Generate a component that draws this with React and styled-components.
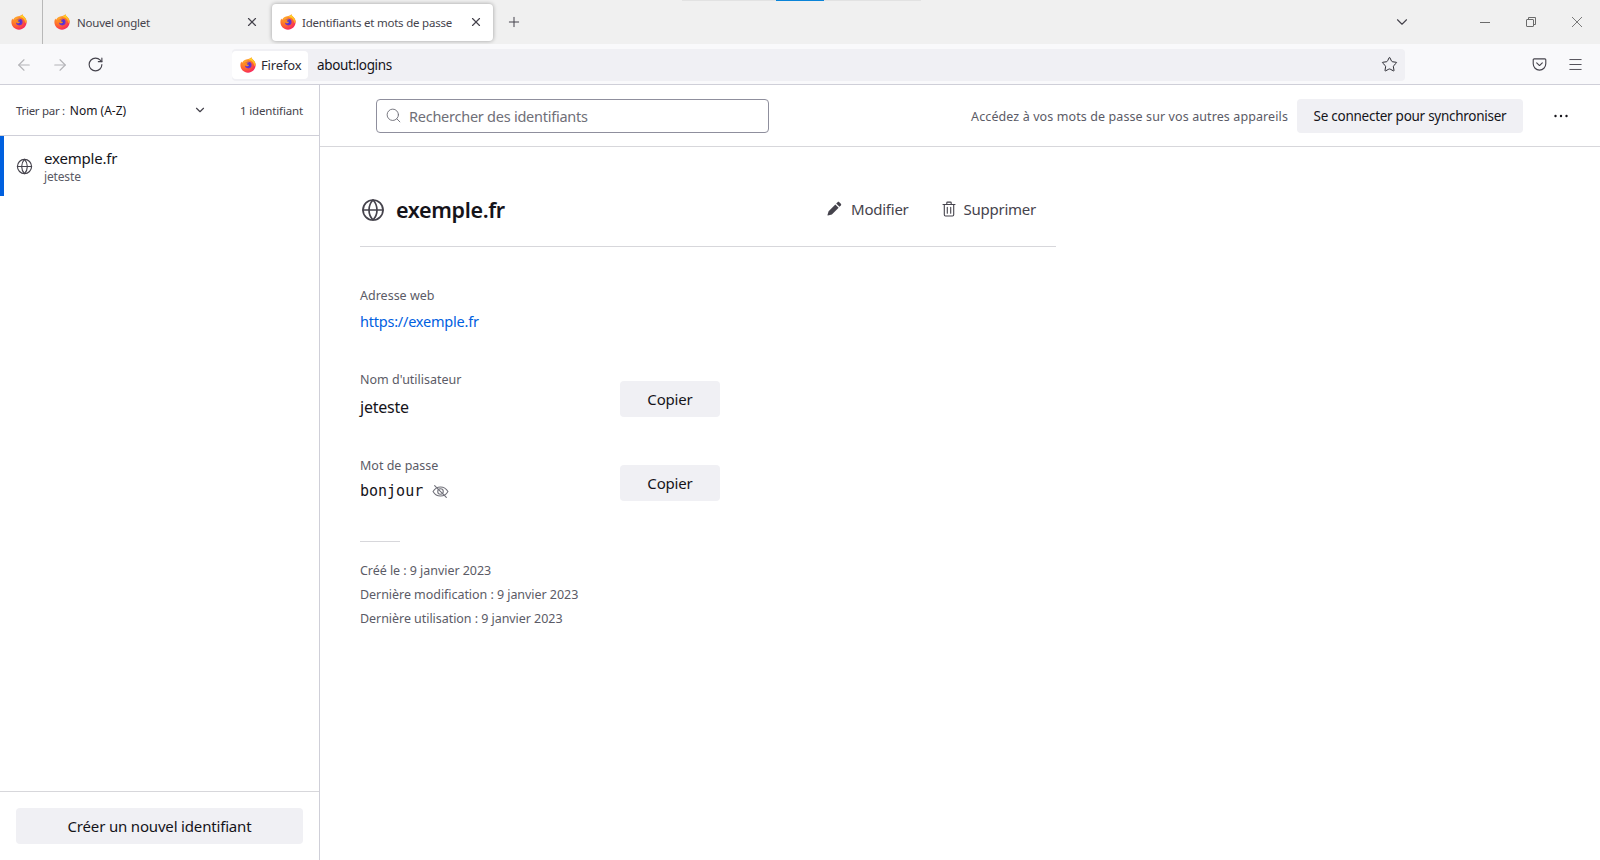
import * as React from 'react';
import styled, { createGlobalStyle } from 'styled-components';
import { ArrowLeft, ArrowRight, ChevronDown, Globe, Menu, Plus, RotateCw, Search, Star, X } from 'lucide-react';

const GlobalStyle = createGlobalStyle`
  html, body { margin: 0; padding: 0; height: 100%; background: #fff; }
  * { box-sizing: border-box; }
  body { font-family: 'Noto Sans', 'Open Sans', sans-serif; color: #15141a; overflow: hidden; }
`;

const Frame = styled.div`
  position: relative;
  width: 1600px;
  height: 860px;
  display: flex;
  flex-direction: column;
  overflow: hidden;
`;

const DragHint = styled.div`
  position: absolute;
  top: 0;
  left: 682px;
  width: 239px;
  height: 1px;
  background: #e2e2e2;
  &::after {
    content: '';
    position: absolute;
    left: 94px;
    width: 48px;
    height: 1px;
    background: #0a84d8;
  }
`;

const TabStrip = styled.div`
  height: 44px;
  flex: none;
  display: flex;
  align-items: center;
  background: #f0f0f0;
`;

const PinnedTab = styled.div`
  width: 43px;
  height: 44px;
  display: flex;
  align-items: center;
  justify-content: center;
  padding-right: 4px;
  border-right: 1px solid #b8b8b8;
`;

const Tab = styled.div`
  height: 37px;
  display: flex;
  align-items: center;
  width: ${(p) => (p.$active ? '221px' : '222px')};
  margin-left: ${(p) => (p.$active ? '7px' : '0')};
  padding: 0 ${(p) => (p.$active ? '10px' : '6px')} 0 ${(p) => (p.$active ? '8px' : '11px')};
  border-radius: 4px;
  background: ${(p) => (p.$active ? '#fff' : 'transparent')};
  box-shadow: ${(p) => (p.$active ? '0 0 4px rgba(0, 0, 0, 0.35)' : 'none')};
  color: #45434c;
  font-size: 11.5px;
`;

const TabTitle = styled.span`
  flex: 1;
  margin-left: ${(p) => (p.$active ? 6 : 7)}px;
  white-space: nowrap;
  letter-spacing: -0.22px;
`;

const NewTab = styled.div`
  margin-left: 13px;
  display: flex;
  color: #45434c;
`;

const TabStripEnd = styled.div`
  margin-left: auto;
  display: flex;
  align-items: center;
`;

const ListAll = styled.div`
  display: flex;
  margin-right: 51px;
  color: #45434c;
`;

const WindowButton = styled.div`
  width: 46px;
  display: flex;
  justify-content: center;
  color: #6b6b6b;
`;

const Toolbar = styled.div`
  height: 41px;
  flex: none;
  display: flex;
  align-items: center;
  padding-top: 1px;
  background: #f9f9fb;
  border-bottom: 1px solid #cfcfd8;
`;

const NavGroup = styled.div`
  width: 232px;
  padding-left: 15px;
  display: flex;
  align-items: center;
  gap: 18px;
`;

const NavButton = styled.div`
  display: flex;
  color: ${(p) => (p.$disabled ? '#b4b4b8' : '#45434c')};
`;

const UrlBar = styled.div`
  width: 1173px;
  height: 32px;
  display: flex;
  align-items: center;
  padding: 0 7px 0 0;
  background: #f0f0f4;
  border-radius: 4px;
`;

const IdentityChip = styled.div`
  width: 76px;
  height: 28px;
  display: flex;
  align-items: center;
  gap: 5px;
  padding-left: 8px;
  background: #fff;
  border-radius: 4px;
  font-size: 13px;
  letter-spacing: -0.13px;
  color: #2b2a33;
`;

const UrlText = styled.span`
  margin-left: 9px;
  flex: 1;
  font-size: 13.5px;
  letter-spacing: -0.36px;
  color: #15141a;
`;

const ToolbarEnd = styled.div`
  flex: 1;
  display: flex;
  align-items: center;
  justify-content: flex-end;
  gap: 20px;
  padding-right: 16px;
  color: #45434c;
`;

const Body = styled.div`
  flex: 1;
  display: flex;
  min-height: 0;
`;

const Sidebar = styled.aside`
  width: 320px;
  flex: none;
  display: flex;
  flex-direction: column;
  border-right: 1px solid #cfcfd8;
`;

const SortBar = styled.div`
  height: 51px;
  flex: none;
  display: flex;
  align-items: center;
  padding: 0 16px;
  border-bottom: 1px solid #cfcfd8;
  font-size: 11.5px;
  color: #45434c;
`;

const SortLabel = styled.span`
  letter-spacing: -0.3px;
`;

const SortValue = styled.span`
  margin-left: 5px;
  font-size: 12px;
  color: #15141a;
  letter-spacing: 0;
`;

const SortChevron = styled.span`
  margin-left: 67px;
  display: flex;
  color: #45434c;
`;

const Count = styled.span`
  margin-left: auto;
  letter-spacing: -0.15px;
`;

const LoginList = styled.div`
  flex: 1;
`;

const LoginItem = styled.div`
  height: 60px;
  display: flex;
  align-items: center;
  padding-left: 12px;
  border-left: 4px solid #0060df;
`;

const LoginText = styled.div`
  margin-left: 11px;
  padding-top: 3px;
  display: flex;
  flex-direction: column;
`;

const LoginTitle = styled.span`
  font-size: 15px;
  line-height: 19px;
  letter-spacing: -0.2px;
  color: #15141a;
`;

const LoginSub = styled.span`
  font-size: 12px;
  line-height: 18px;
  letter-spacing: -0.15px;
  color: #5b5b66;
`;

const SidebarFooter = styled.div`
  flex: none;
  padding: 16px;
  border-top: 1px solid #d7d7db;
`;

const Button = styled.button`
  height: 36px;
  padding: 0;
  flex: none;
  border: 0;
  border-radius: 4px;
  background: #f0f0f4;
  color: #15141a;
  font-family: inherit;
  font-size: ${(p) => p.$size || 15}px;
  letter-spacing: -0.17px;
`;

const CreateButton = styled(Button)`
  display: block;
  width: 100%;
`;

const Main = styled.main`
  flex: 1;
  display: flex;
  flex-direction: column;
`;

const MainHeader = styled.header`
  height: 62px;
  flex: none;
  display: flex;
  align-items: center;
  padding: 0 31px 0 56px;
  border-bottom: 1px solid #d7d7db;
`;

const SearchBox = styled.div`
  width: 393px;
  height: 34px;
  display: flex;
  align-items: center;
  gap: 7px;
  padding-left: 8px;
  border: 1px solid #8f8f9d;
  border-radius: 4px;
  color: #6f6f78;
  font-size: 14.5px;
  letter-spacing: -0.25px;
`;

const SyncHint = styled.span`
  margin-left: auto;
  padding-top: 1px;
  font-size: 12.5px;
  letter-spacing: 0.1px;
  color: #5b5b66;
`;

const SyncButton = styled(Button)`
  margin-left: 9px;
  width: 226px;
  height: 34px;
  letter-spacing: -0.27px;
`;

const More = styled.div`
  margin-left: 30px;
  display: flex;
  color: #15141a;
`;

const Details = styled.section`
  width: 696px;
  margin-left: 40px;
`;

const TitleRow = styled.div`
  height: 100px;
  display: flex;
  align-items: center;
  padding: 26px 20px 0 1px;
  border-bottom: 1px solid #d7d7db;
`;

const Title = styled.h2`
  margin: 0 0 0 11px;
  flex: 1;
  font-size: 21.5px;
  font-weight: 600;
  letter-spacing: -0.35px;
  color: #15141a;
`;

const Action = styled.div`
  display: flex;
  align-items: center;
  gap: ${(p) => p.$inner}px;
  margin-left: ${(p) => p.$gap || 0}px;
  margin-bottom: 2px;
  font-size: 15px;
  letter-spacing: -0.25px;
  color: #45434c;
`;

const Field = styled.div`
  display: flex;
  align-items: flex-start;
  margin-top: ${(p) => p.$top}px;
`;

const FieldText = styled.div`
  width: 260px;
`;

const Label = styled.div`
  font-size: 12.5px;
  line-height: 18px;
  letter-spacing: 0;
  color: #5b5b66;
`;

const Value = styled.div`
  margin-top: ${(p) => p.$top || 4}px;
  display: flex;
  align-items: center;
  height: 24px;
  font-size: 16px;
  letter-spacing: -0.22px;
  color: #15141a;
`;

const LinkValue = styled.a`
  font-size: 14.5px;
  letter-spacing: -0.22px;
  color: #0060df;
  text-decoration: none;
`;

const Password = styled.span`
  font-family: 'DejaVu Sans Mono', 'Liberation Mono', monospace;
  font-size: 15px;
  margin-right: 9px;
  letter-spacing: 0;
`;

const CopyButton = styled(Button)`
  width: 100px;
  margin-top: ${(p) => p.$top}px;
`;

const ShortRule = styled.hr`
  width: 40px;
  height: 1px;
  margin: 38px 0 0;
  border: 0;
  background: #d7d7db;
`;

const Meta = styled.div`
  margin-top: 17px;
`;

const MetaLine = styled.div`
  font-size: 12.5px;
  line-height: 24px;
  letter-spacing: -0.05px;
  color: #5b5b66;
`;

const FirefoxLogo = () => {
  const id = React.useId();
  return (
    <svg width="16" height="16" viewBox="0 0 16 16">
      <defs>
        <radialGradient id={`${id}a`} cx="0.3" cy="0.25" r="0.9">
          <stop offset="0" stopColor="#ffa92a" />
          <stop offset="0.5" stopColor="#ff6a2b" />
          <stop offset="1" stopColor="#f5156c" />
        </radialGradient>
        <linearGradient id={`${id}b`} x1="0" y1="0" x2="0" y2="1">
          <stop offset="0" stopColor="#ffe226" />
          <stop offset="1" stopColor="#ff9a1f" />
        </linearGradient>
      </defs>
      <path d="M11.4 0.3c0.2 1.4 1.5 2.2 2.4 3.3 1.1 1.3 1.8 2.8 1.8 4.5 0 4.2-3.4 7.6-7.6 7.6S0.4 12.3 0.4 8.1c0-1.2 0.3-2.5 0.9-3.6 0.2 0.6 0.5 1 0.9 1.3 0.5-1.5 2-3.1 3.9-3.3 1.9-0.3 4.2-0.6 5.3-2.2z" fill={`url(#${id}a)`} />
      <path d="M11.3 0.3c-0.6 1.5-2.2 2.2-3.7 2.4 2.6 0.2 5.6 1.6 6.4 5.4 0.4 1.9 1.1 1.3 1.6 0 0-1.700-0.7-3.200-1.800-4.500-0.900-1.100-2.300-1.900-2.500-3.300z" fill={`url(#${id}b)`} />
      <circle cx="8.300" cy="8.100" r="3.300" fill="#6a2fd0" />
      <circle cx="8.500" cy="8.100" r="1.700" fill="#3d3ad8" />
      <path d="M3.800 6.200c1.600-1.300 4.200-1.400 5.600-0.200-1.300-0.200-2.200 0.300-2.700 1 0.500 0.800 1.600 0.700 2.600 0.700-0.300 1-1.500 1.700-2.600 1.500-1.300-0.200-2.400-1.500-2.900-3z" fill="#ff8a1c" />
    </svg>
  );
};

const RestoreIcon = () => (
  <svg width="12" height="12" viewBox="0 0 12 12" fill="none" stroke="currentColor">
    <rect x="1.500" y="3.500" width="7" height="7" rx="0.500" />
    <path d="M3.500 3.500V1.500h7v7H8.500" />
  </svg>
);

const MinimizeIcon = () => (
  <svg width="12" height="12" viewBox="0 0 12 12" fill="none" stroke="currentColor">
    <path d="M1 6.500h10" />
  </svg>
);

const ThinClose = () => (
  <svg width="12" height="12" viewBox="0 0 12 12" fill="none" stroke="currentColor" strokeWidth="0.900">
    <path d="M1 1l10 10M11 1L1 11" />
  </svg>
);

const PocketIcon = () => (
  <svg width="15" height="15" viewBox="0 0 16 16" fill="none" stroke="currentColor" strokeWidth="1.200" strokeLinecap="round" strokeLinejoin="round">
    <path d="M2.300 2h11.400c0.600 0 1 0.400 1 1v4.200c0 3.700-3 6.800-6.700 6.800S1.300 10.900 1.300 7.200V3c0-0.600 0.400-1 1-1z" />
    <path d="M5 6.200l3 2.900 3-2.900" />
  </svg>
);

const Dots = () => (
  <svg width="16" height="16" viewBox="0 0 16 16" fill="currentColor">
    <circle cx="2.500" cy="8" r="1.200" />
    <circle cx="8" cy="8" r="1.200" />
    <circle cx="13.500" cy="8" r="1.200" />
  </svg>
);

const PencilIcon = () => (
  <svg width="15" height="15" viewBox="0 0 16 16" fill="currentColor">
    <path d="M11.300 1.200c0.500-0.500 1.300-0.500 1.800 0l1.700 1.700c0.500 0.500 0.500 1.300 0 1.800l-1.500 1.500-3.500-3.500 1.500-1.500zM8.900 3.600l3.500 3.500-7.200 7.200-4.200 1.200c-0.300 0.100-0.600-0.200-0.500-0.500l1.200-4.200 7.200-7.200z" />
  </svg>
);

const TrashIcon = () => (
  <svg width="16" height="16" viewBox="0 0 16 16" fill="none" stroke="currentColor" strokeWidth="1.100" strokeLinecap="round">
    <path d="M2 3.500h12M5.800 3.300V1.800c0-0.400 0.300-0.700 0.700-0.700h3c0.400 0 0.700 0.300 0.700 0.700v1.500" />
    <path d="M3.300 3.500v10.300c0 0.700 0.500 1.200 1.200 1.200h7c0.700 0 1.200-0.500 1.200-1.200V3.500" />
    <path d="M6.300 6.300v6M9.700 6.300v6" />
  </svg>
);

const EyeOffIcon = () => (
  <svg width="17" height="17" viewBox="0 0 16 16" fill="none" stroke="#6f6f78" strokeWidth="1" strokeLinecap="round">
    <path d="M1 8c1.600-2.800 4-4.300 7-4.300s5.400 1.500 7 4.300c-1.600 2.800-4 4.300-7 4.300S2.600 10.800 1 8z" />
    <circle cx="8" cy="8" r="2.600" />
    <path d="M2.500 2.500l11 11" />
  </svg>
);

const App = () => (
  <Frame>
    <GlobalStyle />
    <DragHint />
    <TabStrip>
      <PinnedTab>
        <FirefoxLogo />
      </PinnedTab>
      <Tab>
        <FirefoxLogo />
        <TabTitle>Nouvel onglet</TabTitle>
        <X size={14} />
      </Tab>
      <Tab $active>
        <FirefoxLogo />
        <TabTitle $active>Identifiants et mots de passe</TabTitle>
        <X size={14} />
      </Tab>
      <NewTab>
        <Plus size={16} strokeWidth={1.5} />
      </NewTab>
      <TabStripEnd>
        <ListAll>
          <ChevronDown size={18} strokeWidth={1.5} />
        </ListAll>
        <WindowButton>
          <MinimizeIcon />
        </WindowButton>
        <WindowButton>
          <RestoreIcon />
        </WindowButton>
        <WindowButton>
          <ThinClose />
        </WindowButton>
      </TabStripEnd>
    </TabStrip>
    <Toolbar>
      <NavGroup>
        <NavButton $disabled>
          <ArrowLeft size={18} strokeWidth={1.5} />
        </NavButton>
        <NavButton $disabled>
          <ArrowRight size={18} strokeWidth={1.5} />
        </NavButton>
        <NavButton>
          <RotateCw size={17} strokeWidth={1.6} />
        </NavButton>
      </NavGroup>
      <UrlBar>
        <IdentityChip>
          <FirefoxLogo />
          Firefox
        </IdentityChip>
        <UrlText>about:logins</UrlText>
        <Star size={17} strokeWidth={1.4} color="#2b2a33" />
      </UrlBar>
      <ToolbarEnd>
        <PocketIcon />
        <Menu size={17} strokeWidth={1.3} />
      </ToolbarEnd>
    </Toolbar>
    <Body>
      <Sidebar>
        <SortBar>
          <SortLabel>Trier par :</SortLabel>
          <SortValue>Nom (A-Z)</SortValue>
          <SortChevron>
            <ChevronDown size={14} />
          </SortChevron>
          <Count>1 identifiant</Count>
        </SortBar>
        <LoginList>
          <LoginItem>
            <Globe size={17} strokeWidth={1.6} color="#45434c" />
            <LoginText>
              <LoginTitle>exemple.fr</LoginTitle>
              <LoginSub>jeteste</LoginSub>
            </LoginText>
          </LoginItem>
        </LoginList>
        <SidebarFooter>
          <CreateButton>Créer un nouvel identifiant</CreateButton>
        </SidebarFooter>
      </Sidebar>
      <Main>
        <MainHeader>
          <SearchBox>
            <Search size={17} strokeWidth={1.3} />
            Rechercher des identifiants
          </SearchBox>
          <SyncHint>Accédez à vos mots de passe sur vos autres appareils</SyncHint>
          <SyncButton $size={13.5}>Se connecter pour synchroniser</SyncButton>
          <More>
            <Dots />
          </More>
        </MainHeader>
        <Details>
          <TitleRow>
            <Globe size={24} strokeWidth={1.7} color="#45434c" />
            <Title>exemple.fr</Title>
            <Action $inner={9}>
              <PencilIcon />
              Modifier
            </Action>
            <Action $gap={32} $inner={7}>
              <TrashIcon />
              Supprimer
            </Action>
          </TitleRow>
          <Field $top={40}>
            <FieldText>
              <Label>Adresse web</Label>
              <Value>
                <LinkValue href="https://exemple.fr">https://exemple.fr</LinkValue>
              </Value>
            </FieldText>
          </Field>
          <Field $top={38}>
            <FieldText>
              <Label>Nom d'utilisateur</Label>
              <Value $top={6}>jeteste</Value>
            </FieldText>
            <CopyButton $top={10}>Copier</CopyButton>
          </Field>
          <Field $top={38}>
            <FieldText>
              <Label>Mot de passe</Label>
              <Value>
                <Password>bonjour</Password>
                <EyeOffIcon />
              </Value>
            </FieldText>
            <CopyButton $top={8}>Copier</CopyButton>
          </Field>
          <ShortRule />
          <Meta>
            <MetaLine>Créé le : 9 janvier 2023</MetaLine>
            <MetaLine>Dernière modification : 9 janvier 2023</MetaLine>
            <MetaLine>Dernière utilisation : 9 janvier 2023</MetaLine>
          </Meta>
        </Details>
      </Main>
    </Body>
  </Frame>
);

export default App;
